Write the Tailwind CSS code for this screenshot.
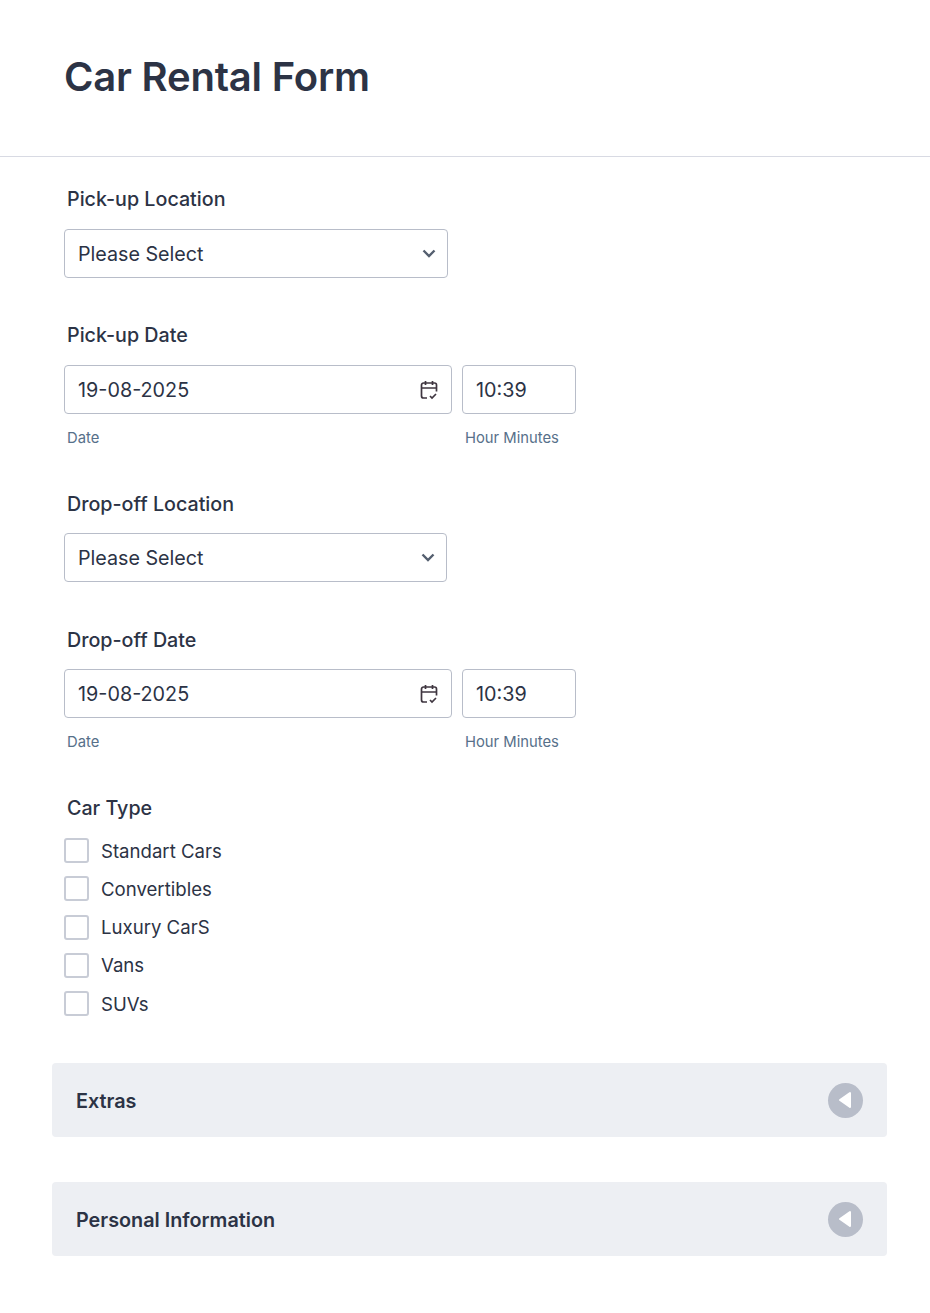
<!DOCTYPE html>
<html lang="en">
<head>
    <meta charset="UTF-8">
    <meta name="viewport" content="width=device-width, initial-scale=1.0">
    <title>Car Rental Form</title>
    <script src="https://cdn.jsdelivr.net/npm/@tailwindcss/browser@4"></script>
</head>
<body class="bg-white font-['Inter',sans-serif] text-[#2c3345]">
    <div class="h-[157px] border-b border-[#d8dae3] pl-[64px] pt-[54px]">
        <h1 class="text-[40px] leading-[46px] font-semibold tracking-[-0.2px]">Car Rental Form</h1>
    </div>

    <div class="pl-[64px] pt-[30px]">
        <!-- pick-up location -->
        <label class="block pl-[3px] text-[19.7px] leading-[24px] font-medium">Pick-up Location</label>
        <div class="mt-[18px] flex h-[49px] w-[384px] items-center justify-between rounded-[4px] border border-[#b8bdc9] pl-[13px] pr-[11px]">
            <span class="pt-[2px] text-[19.7px]">Please Select</span>
            <svg width="14" height="9" viewBox="0 0 14 9" fill="none" stroke="#545f6f" stroke-width="2.4"><path d="M1.5 1.5 7 7l5.5-5.5"/></svg>
        </div>

        <!-- pick-up date -->
        <label class="mt-[45px] block pl-[3px] text-[19.7px] leading-[24px] font-medium">Pick-up Date</label>
        <div class="mt-[18px] flex gap-[10px]">
            <div>
                <div class="flex h-[49px] w-[388px] items-center justify-between rounded-[4px] border border-[#b8bdc9] pl-[13px] pr-[12px]">
                    <span class="pt-[2px] text-[19.8px]">19-08-2025</span>
                    <svg width="20" height="20" viewBox="0 0 20 20" fill="none" stroke="#3f3640" stroke-width="1.7"><path d="M8 18H4.5A2 2 0 0 1 2.500 16V5a2 2 0 0 1 2-2h11a2 2 0 0 1 2 2v6.500M2.500 8h15M6.500 1v4M13.500 1v4"/><path d="m11 16 2 2 4-4"/></svg>
                </div>
                <div class="mt-[16px] pl-[3px] text-[14.800px] leading-[17px] text-[#57708a]">Date</div>
            </div>
            <div>
                <div class="flex h-[49px] w-[114px] items-center rounded-[4px] border border-[#b8bdc9] pl-[13px]">
                    <span class="pt-[2px] text-[19.8px]">10:39</span>
                </div>
                <div class="mt-[16px] pl-[3px] text-[14.800px] leading-[17px] text-[#57708a]">Hour Minutes</div>
            </div>
        </div>

        <!-- drop-off location -->
        <label class="mt-[45px] block pl-[3px] text-[19.7px] leading-[24px] font-medium">Drop-off Location</label>
        <div class="mt-[17px] flex h-[49px] w-[383px] items-center justify-between rounded-[4px] border border-[#b8bdc9] pl-[13px] pr-[11px]">
            <span class="pt-[2px] text-[19.7px]">Please Select</span>
            <svg width="14" height="9" viewBox="0 0 14 9" fill="none" stroke="#545f6f" stroke-width="2.4"><path d="M1.5 1.5 7 7l5.5-5.5"/></svg>
        </div>

        <!-- drop-off date -->
        <label class="mt-[46px] block pl-[3px] text-[19.7px] leading-[24px] font-medium">Drop-off Date</label>
        <div class="mt-[17px] flex gap-[10px]">
            <div>
                <div class="flex h-[49px] w-[388px] items-center justify-between rounded-[4px] border border-[#b8bdc9] pl-[13px] pr-[12px]">
                    <span class="pt-[2px] text-[19.8px]">19-08-2025</span>
                    <svg width="20" height="20" viewBox="0 0 20 20" fill="none" stroke="#3f3640" stroke-width="1.7"><path d="M8 18H4.5A2 2 0 0 1 2.500 16V5a2 2 0 0 1 2-2h11a2 2 0 0 1 2 2v6.500M2.500 8h15M6.500 1v4M13.500 1v4"/><path d="m11 16 2 2 4-4"/></svg>
                </div>
                <div class="mt-[16px] pl-[3px] text-[14.800px] leading-[17px] text-[#57708a]">Date</div>
            </div>
            <div>
                <div class="flex h-[49px] w-[114px] items-center rounded-[4px] border border-[#b8bdc9] pl-[13px]">
                    <span class="pt-[2px] text-[19.8px]">10:39</span>
                </div>
                <div class="mt-[16px] pl-[3px] text-[14.800px] leading-[17px] text-[#57708a]">Hour Minutes</div>
            </div>
        </div>

        <!-- car type -->
        <label class="mt-[45px] block pl-[3px] text-[19.7px] leading-[24px] font-medium">Car Type</label>
        <div class="mt-[18px] flex flex-col gap-[13.25px]">
            <div class="flex h-[25px] items-center gap-[12px]"><span class="size-[25px] rounded-[3px] border-2 border-[#c8ccd6]"></span><span class="pt-[2px] text-[18.6px]">Standart Cars</span></div>
            <div class="flex h-[25px] items-center gap-[12px]"><span class="size-[25px] rounded-[3px] border-2 border-[#c8ccd6]"></span><span class="pt-[2px] text-[18.6px]">Convertibles</span></div>
            <div class="flex h-[25px] items-center gap-[12px]"><span class="size-[25px] rounded-[3px] border-2 border-[#c8ccd6]"></span><span class="pt-[2px] text-[18.6px]">Luxury CarS</span></div>
            <div class="flex h-[25px] items-center gap-[12px]"><span class="size-[25px] rounded-[3px] border-2 border-[#c8ccd6]"></span><span class="pt-[2px] text-[18.6px]">Vans</span></div>
            <div class="flex h-[25px] items-center gap-[12px]"><span class="size-[25px] rounded-[3px] border-2 border-[#c8ccd6]"></span><span class="pt-[2px] text-[18.6px]">SUVs</span></div>
        </div>
    </div>

    <!-- collapsed sections -->
    <div class="mt-[47px] flex flex-col gap-[45px] pl-[52px] pr-[43px]">
        <div class="flex h-[74px] items-center justify-between rounded-[4px] bg-[#edeff3] pl-[24px] pr-[24px]">
            <span class="pt-[4px] text-[19.8px] font-semibold">Extras</span>
            <span class="flex size-[35px] items-center justify-center rounded-full bg-[#b8bdc9]">
                <svg class="-ml-[2px]" width="14" height="18" viewBox="0 0 14 18" fill="#fff" stroke="#fff" stroke-width="2" stroke-linejoin="round"><path d="M12 2v14L2 9z"/></svg>
            </span>
        </div>
        <div class="flex h-[74px] items-center justify-between rounded-[4px] bg-[#edeff3] pl-[24px] pr-[24px]">
            <span class="pt-[4px] text-[19.8px] font-semibold">Personal Information</span>
            <span class="flex size-[35px] items-center justify-center rounded-full bg-[#b8bdc9]">
                <svg class="-ml-[2px]" width="14" height="18" viewBox="0 0 14 18" fill="#fff" stroke="#fff" stroke-width="2" stroke-linejoin="round"><path d="M12 2v14L2 9z"/></svg>
            </span>
        </div>
    </div>
</body>
</html>
